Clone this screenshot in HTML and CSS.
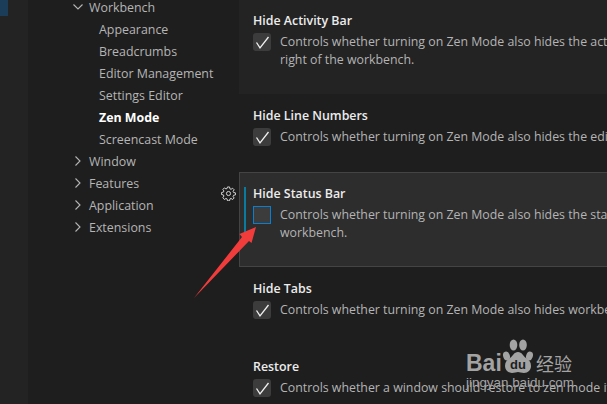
FILE: index.html
```html
<!DOCTYPE html>
<html lang="en">
<head>
<meta charset="utf-8">
<title>Zen Mode settings</title>
<link rel="stylesheet" href="styles.css">
</head>
<body>
<div class="app">
  <div class="activity"><div class="activity-item"></div></div>
  <nav class="tree">
    <div class="tree-row"><svg class="chev" viewBox="0 0 16 16"><path d="M3.500 5.500 8 10l4.500-4.500"/></svg>Workbench</div>
    <div class="tree-child">Appearance</div>
    <div class="tree-child">Breadcrumbs</div>
    <div class="tree-child">Editor Management</div>
    <div class="tree-child">Settings Editor</div>
    <div class="tree-child tree-active">Zen Mode</div>
    <div class="tree-child">Screencast Mode</div>
    <div class="tree-row"><svg class="chev" viewBox="0 0 16 16"><path d="M5.500 3.500 10 8l-4.500 4.500"/></svg>Window</div>
    <div class="tree-row"><svg class="chev" viewBox="0 0 16 16"><path d="M5.500 3.500 10 8l-4.500 4.500"/></svg>Features</div>
    <div class="tree-row"><svg class="chev" viewBox="0 0 16 16"><path d="M5.500 3.500 10 8l-4.500 4.500"/></svg>Application</div>
    <div class="tree-row"><svg class="chev" viewBox="0 0 16 16"><path d="M5.500 3.500 10 8l-4.500 4.500"/></svg>Extensions</div>
  </nav>
  <main class="settings">
    <section class="row row-hover">
      <h3 class="title">Hide Activity Bar</h3>
      <div class="body">
        <span class="check"><svg viewBox="0 0 18 18"><path d="M3.500 9.500 7 14.800 15.500 4"/></svg></span>
        <p class="desc"><span class="line">Controls whether turning on Zen Mode also hides the activity bar at either the left or</span><span class="line">right of the workbench.</span></p>
      </div>
    </section>
    <section class="row row-single">
      <h3 class="title">Hide Line Numbers</h3>
      <div class="body">
        <span class="check"><svg viewBox="0 0 18 18"><path d="M3.500 9.500 7 14.800 15.500 4"/></svg></span>
        <p class="desc"><span class="line">Controls whether turning on Zen Mode also hides the editor line numbers.</span></p>
      </div>
    </section>
    <section class="row row-focus">
      <svg class="gear" viewBox="0 0 16 16"><circle cx="8" cy="8" r="2.200"/><path d="M6.900 1h2.200l.4 2 1.200.5 1.700-1.100 1.600 1.600-1.100 1.700.5 1.200 2 .4v2.200l-2 .4-.5 1.200 1.100 1.700-1.600 1.600-1.700-1.100-1.200.5-.4 2H6.900l-.4-2-1.200-.5-1.700 1.100L2 12.400l1.100-1.700-.5-1.200-2-.4V6.900l2-.4.5-1.200L2 3.600 3.600 2l1.700 1.100 1.200-.5z"/></svg>
      <span class="focus-bar"></span>
      <h3 class="title">Hide Status Bar</h3>
      <div class="body">
        <span class="check check-off"></span>
        <p class="desc"><span class="line">Controls whether turning on Zen Mode also hides the status bar at the bottom of the</span><span class="line">workbench.</span></p>
      </div>
    </section>
    <section class="row row-single">
      <h3 class="title">Hide Tabs</h3>
      <div class="body">
        <span class="check"><svg viewBox="0 0 18 18"><path d="M3.500 9.500 7 14.800 15.500 4"/></svg></span>
        <p class="desc"><span class="line">Controls whether turning on Zen Mode also hides workbench tabs.</span></p>
      </div>
    </section>
    <section class="row row-single">
      <h3 class="title">Restore</h3>
      <div class="body">
        <span class="check"><svg viewBox="0 0 18 18"><path d="M3.500 9.500 7 14.800 15.500 4"/></svg></span>
        <p class="desc"><span class="line">Controls whether a window should restore to zen mode if it was exited in zen mode.</span></p>
      </div>
    </section>
  </main>
</div>
<svg class="arrow" viewBox="0 0 607 404"><polygon points="256,227 239.500,234 242,237 194,298 249,241 251.500,243"/></svg>
<div class="mark">
  <div class="mark-top">
    <span class="mark-bai">Bai</span>
    <svg class="mark-paw" viewBox="0 0 32 34">
      <ellipse cx="4.500" cy="17" rx="3.300" ry="4.400" transform="rotate(-20 4.500 17)"/>
      <ellipse cx="11.500" cy="6" rx="3.800" ry="5.500"/>
      <ellipse cx="21" cy="6" rx="3.800" ry="5.500"/>
      <ellipse cx="27.500" cy="17" rx="3.300" ry="4.400" transform="rotate(20 27.500 17)"/>
      <path d="M16 13c-4 0-5 4-8 6-3 2-5 4-5 8 0 4 3 7 7 7 2.500 0 4.500-1 6-1s3.500 1 6 1c4 0 7-3 7-7 0-4-2-6-5-8-3-2-4-6-8-6z"/>
      <text class="mark-du" x="16" y="30">du</text>
    </svg>
    <span class="mark-cn">经验</span>
  </div>
  <div class="mark-url">jingyan.baidu.com</div>
</div>
</body>
</html>
```
FILE: styles.css
```css
* { box-sizing: border-box; }
html, body { margin: 0; height: 100%; }
body {
  position: relative;
  width: 607px;
  height: 404px;
  overflow: hidden;
  background: #1e1e1e;
  font-family: "Open Sans", "Noto Sans", sans-serif;
  font-size: 12.400px;
}
.app { display: flex; height: 404px; overflow: hidden; }
.activity { flex: 0 0 28px; background: #232323; }
.activity-item { width: 8px; height: 16px; background: #1b3d5a; }
.tree { flex: 0 0 211px; margin-top: -4px; color: #b5b5b5; }
.tree-row { display: flex; align-items: center; height: 22px; padding-left: 42px; gap: 3px; }
.tree-child { display: flex; align-items: center; height: 22px; padding: 1px 0 0 71px; }
.tree-active { color: #ffffff; font-weight: 700; }
.chev { width: 16px; height: 16px; fill: none; stroke: #b5b5b5; stroke-width: 1.100; }
.settings { flex: 1; min-width: 0; margin-top: -1px; }
.row { position: relative; padding: 12px 0 24px 13px; border: 1px solid transparent; white-space: nowrap; }
.row-single { padding-bottom: 25px; }
.row-hover { background: #232323; }
.row-focus { background: #2d2d2d; border-color: #444444; border-right: 0; }
.title { margin: 0; font-size: 12.400px; font-weight: 600; line-height: 18px; color: #ececec; }
.body { display: flex; gap: 9px; margin-top: 3px; }
.check { flex: 0 0 18px; width: 18px; height: 18px; border-radius: 3px; background: #3c3c3c; }
.check svg { display: block; width: 18px; height: 18px; fill: none; stroke: #f0f0f0; stroke-width: 1.300; }
.check-off { border: 1px solid #0a7fd0; border-radius: 0; }
.desc { margin: 0; color: #b4b4b4; line-height: 18px; font-size: 12.350px; }
.line { display: block; }
.gear { position: absolute; left: -19px; top: 13px; width: 15px; height: 15px; fill: none; stroke: #dcdcdc; stroke-width: 1; }
.focus-bar { position: absolute; left: 4px; top: 14px; bottom: 33px; width: 2px; background: #0a7a9f; }
.arrow { position: absolute; left: 0; top: 0; width: 607px; height: 404px; fill: #f23c3c; pointer-events: none; }
.mark { position: absolute; left: 466px; top: 339px; width: 108px; color: #a3a3a3; }
.mark-top { display: flex; align-items: flex-end; height: 34px; }
.mark-bai { font-family: "Liberation Sans", sans-serif; font-weight: 700; font-size: 23px; line-height: 20px; width: 36px; }
.mark-paw { flex: 0 0 32px; width: 32px; height: 34px; fill: #a3a3a3; }
.mark-du { font-family: "Liberation Sans", sans-serif; font-size: 13px; font-weight: 700; fill: #1e1e1e; text-anchor: middle; }
.mark-cn { font-family: "Noto Sans CJK SC", sans-serif; font-size: 18px; line-height: 20px; margin-left: 2px; white-space: nowrap; }
.mark-url { font-family: "Liberation Sans", sans-serif; font-size: 13.400px; line-height: 13px; margin-top: 3px; white-space: nowrap; }
```
